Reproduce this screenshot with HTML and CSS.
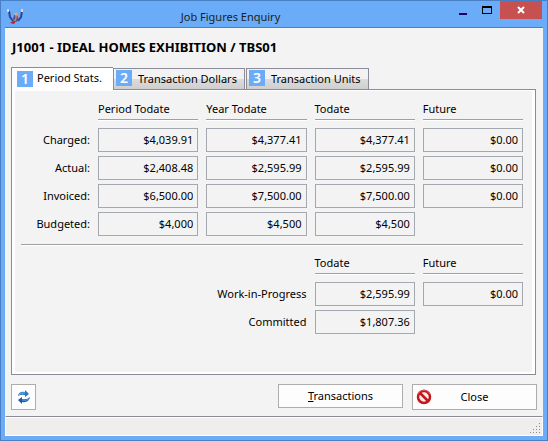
FILE: index.html
```
<!DOCTYPE html>
<html lang="en">
<head>
<meta charset="utf-8">
<title>Job Figures Enquiry</title>
<link rel="stylesheet" href="styles.css">
</head>
<body>
<div class="window">
  <header class="titlebar">
    <svg class="app-icon" viewBox="0 0 18 18" aria-hidden="true">
      <path d="M3 5L4 11L7 15" fill="none" stroke="#34448f" stroke-width="2"/>
      <path d="M16 5L15 11L12 15" fill="none" stroke="#34448f" stroke-width="2"/>
      <path d="M8 9L7 13L10 16L13 14L11 9Z" fill="#4a519b"/>
      <path d="M10 9L10 12L9 15" fill="none" stroke="#ef7c35" stroke-width="1.5"/>
      <path d="M4 17L7 15L10 15L8 18Z" fill="#bd2430"/>
      <circle cx="10" cy="8" r="1.5" fill="#e5aa78"/>
      <path d="M1 3h2v3H1zM15 3h2v3h-2z" fill="#dcd6d8"/>
    </svg>
    <span class="title">Job Figures Enquiry</span>
    <div class="controls">
      <button class="control" aria-label="Minimize"><svg width="10" height="10"><path d="M1 8h8v2H1z" fill="#210063"/></svg></button>
      <button class="control" aria-label="Maximize"><svg width="10" height="10"><path d="M0 1h10v8H0zM1 3v5h8V3z" fill="#000" fill-rule="evenodd"/></svg></button>
      <button class="control control-close" aria-label="Close window"><svg width="8" height="8"><path d="M1 1L7 7M7 1L1 7" stroke="#fff" stroke-width="2"/></svg></button>
    </div>
  </header>
  <div class="client">
    <main class="content">
      <h1 class="heading">J1001 - IDEAL HOMES EXHIBITION / TBS01</h1>
      <div class="tabs" role="tablist">
        <button class="tab tab-active" role="tab" aria-selected="true"><span class="badge">1</span>Period Stats.</button>
        <button class="tab" role="tab" aria-selected="false"><span class="badge">2</span>Transaction Dollars</button>
        <button class="tab" role="tab" aria-selected="false"><span class="badge">3</span>Transaction Units</button>
      </div>
      <section class="panel" role="tabpanel">
        <table class="figures">
          <colgroup><col class="label-col"><col><col><col><col></colgroup>
          <thead>
            <tr><td></td><th scope="col"><span>Period Todate</span></th><th scope="col"><span>Year Todate</span></th><th scope="col"><span>Todate</span></th><th scope="col"><span>Future</span></th></tr>
          </thead>
          <tbody>
            <tr><th scope="row"><label for="c1">Charged:</label></th><td><input id="c1" readonly value="$4,039.91"></td><td><input aria-label="Charged, year" readonly value="$4,377.41"></td><td><input aria-label="Charged, todate" readonly value="$4,377.41"></td><td><input aria-label="Charged, future" readonly value="$0.00"></td></tr>
            <tr><th scope="row"><label for="a1">Actual:</label></th><td><input id="a1" readonly value="$2,408.48"></td><td><input aria-label="Actual, year" readonly value="$2,595.99"></td><td><input aria-label="Actual, todate" readonly value="$2,595.99"></td><td><input aria-label="Actual, future" readonly value="$0.00"></td></tr>
            <tr><th scope="row"><label for="i1">Invoiced:</label></th><td><input id="i1" readonly value="$6,500.00"></td><td><input aria-label="Invoiced, year" readonly value="$7,500.00"></td><td><input aria-label="Invoiced, todate" readonly value="$7,500.00"></td><td><input aria-label="Invoiced, future" readonly value="$0.00"></td></tr>
            <tr><th scope="row"><label for="b1">Budgeted:</label></th><td><input id="b1" readonly value="$4,000"></td><td><input aria-label="Budgeted, year" readonly value="$4,500"></td><td><input aria-label="Budgeted, todate" readonly value="$4,500"></td><td></td></tr>
          </tbody>
        </table>
        <hr class="divider">
        <table class="figures">
          <colgroup><col class="label-col"><col><col><col><col></colgroup>
          <thead>
            <tr><td colspan="3"></td><th scope="col"><span>Todate</span></th><th scope="col"><span>Future</span></th></tr>
          </thead>
          <tbody>
            <tr><th scope="row" colspan="3"><label for="w1">Work-in-Progress</label></th><td><input id="w1" readonly value="$2,595.99"></td><td><input aria-label="Work-in-Progress, future" readonly value="$0.00"></td></tr>
            <tr><th scope="row" colspan="3"><label for="m1">Committed</label></th><td><input id="m1" readonly value="$1,807.36"></td><td></td></tr>
          </tbody>
        </table>
      </section>
      <div class="actions">
        <button class="button button-icon" aria-label="Refresh">
          <svg width="14" height="16" viewBox="0 0 14 16">
            <path d="M1 7Q2 2 8 3V1L12 5L8 8V6Q4 5 1 7Z" fill="#2877c8"/>
            <path d="M13 8Q12 14 5 13V15L1 11L5 8V10Q10 11 13 8Z" fill="#1d58ac"/>
            <path d="M2 6Q4 3 8 4" fill="none" stroke="#67b9e5"/>
            <path d="M5 11Q9 12 12 10" fill="none" stroke="#53a7dc"/>
          </svg>
        </button>
        <button class="button button-transactions"><span><u>T</u>ransactions</span></button>
        <button class="button button-close">
          <svg width="16" height="16" viewBox="0 0 16 16" aria-hidden="true">
            <circle cx="8" cy="8" r="6" fill="#f7efef" stroke="#c5161c" stroke-width="2.5"/>
            <path d="M4 4L12 12" stroke="#c5161c" stroke-width="2.5"/>
            <path d="M2 5Q4 1 8 1Q12 1 14 5" fill="none" stroke="#d65b5e"/>
          </svg>
          <span>Close</span>
        </button>
      </div>
    </main>
    <footer class="statusbar">
      <svg width="12" height="12" aria-hidden="true"><path d="M9 0h1v1H9zM6 3h1v1H6zM9 3h1v1H9zM3 6h1v1H3zM6 6h1v1H6zM9 6h1v1H9zM0 9h1v1H0zM3 9h1v1H3zM6 9h1v1H6zM9 9h1v1H9z" fill="#8c8c98"/></svg>
    </footer>
  </div>
</div>
</body>
</html>
```
FILE: styles.css
```
* { box-sizing: border-box; }

body {
  margin: 0;
  font: 11px/16px "Noto Sans", "Open Sans", sans-serif;
  color: #000;
}

button, input { font: inherit; color: inherit; }
button { padding: 0; border: 0; }

.window {
  display: flex;
  flex-direction: column;
  min-height: 100vh;
  padding: 0 4px 4px;
  border: 1px solid #487fc4;
  background: #6aacf8;
}

.titlebar { display: flex; height: 26px; }
.app-icon { width: 18px; height: 18px; margin: 5px 0 0 1px; }
.title { flex: 1; padding: 8px 14px 0 0; color: #1c1c1c; text-align: center; }
.controls { display: flex; }

.control {
  display: grid;
  place-items: center;
  width: 24px;
  height: 18px;
  background: none;
}

.control-close { width: 42px; margin: 0 1px; background: #c75050; }

.client {
  display: flex;
  flex: 1;
  flex-direction: column;
  border-top: 1px solid #487fc4;
  background: #f3f3f3;
}

.content {
  display: flex;
  flex: 1;
  flex-direction: column;
  padding: 10px 6px 6px;
}

.heading { margin: 0 1px; font-size: 13px; line-height: 18px; }

.tabs { display: flex; align-items: flex-end; height: 33px; }

.tab {
  display: flex;
  gap: 6px;
  height: 21px;
  padding: 1px 7px 0 2px;
  border: 1px solid #8c8c98;
  border-bottom: 0;
  background: linear-gradient(#f2f2f2 50%, #dcdcdc 50%, #cfcfcf);
  line-height: 18px;
  white-space: nowrap;
}

.tab:last-child { margin-left: 1px; }

.tab-active {
  gap: 4px;
  height: 23px;
  padding: 3px 11px 0 5px;
  margin-bottom: -1px;
  border-right: 0;
  background: #fff;
  line-height: 14px;
  z-index: 1;
}

.badge {
  width: 16px;
  height: 16px;
  background: #6aacf8;
  color: #fff;
  font-size: 14px;
  font-weight: 600;
  line-height: 16px;
  text-align: center;
}

.panel {
  flex: 1;
  margin-right: 1px;
  padding: 10px 12px 0 9px;
  border: 1px solid #8c8c98;
  box-shadow: inset 3px 1px #fff, inset -3px -2px #fff;
}

.figures {
  width: 100%;
  table-layout: fixed;
  border-collapse: collapse;
}

.label-col { width: 69px; }
.figures th { font-weight: 400; }
.figures th, .figures td { height: 28px; padding: 0 0 4px 8px; }
.figures thead th, .figures thead td { padding-bottom: 8px; text-align: left; }

.figures span {
  display: block;
  height: 20px;
  padding-top: 1px;
  border-bottom: 1px solid #a0a0a0;
  box-shadow: 0 1px #fff;
}

.figures tbody th { padding-left: 0; text-align: right; }

.figures input {
  display: block;
  width: 100%;
  height: 24px;
  padding: 0 4px 2px;
  border: 1px solid #a4a9b0;
  background: #f3f3f3;
  text-align: right;
}

.divider {
  height: 2px;
  margin: 4px 0 8px;
  border: 0;
  border-top: 1px solid #a0a0a0;
  background: #fff;
}

.actions {
  display: flex;
  align-items: flex-start;
  justify-content: flex-end;
  gap: 9px;
  padding-top: 9px;
}

.button {
  display: flex;
  align-items: center;
  justify-content: center;
  width: 125px;
  height: 26px;
  border: 1px solid #adadad;
  background: #fdfdfd;
}

.button-icon { width: 25px; margin-right: auto; }
.button-transactions { height: 24px; }
.button-close { padding: 0 3px; }
.button-close span { flex: 1; padding-right: 16px; }

.statusbar {
  display: flex;
  align-items: flex-end;
  justify-content: flex-end;
  height: 20px;
  border: 1px solid #fff;
  border-top: 1px solid #8c8c98;
  background: #f0eded;
  box-shadow: inset 0 1px #fff;
}
```
